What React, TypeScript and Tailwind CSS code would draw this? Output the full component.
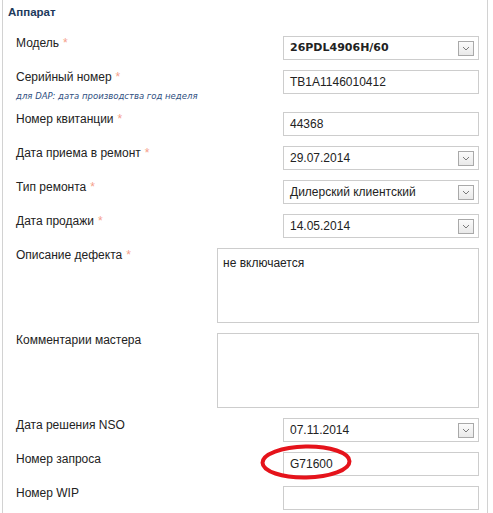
import React from 'react';

type Field = {
  label: string;
  required?: boolean;
  hint?: string;
  kind: 'input' | 'select' | 'textarea';
  value?: string;
  bold?: boolean;
  marked?: boolean;
};

const FIELDS: Field[] = [
  { label: 'Модель', required: true, kind: 'select', value: '26PDL4906H/60', bold: true },
  {
    label: 'Серийный номер',
    required: true,
    hint: 'для DAP: дата производства год неделя',
    kind: 'input',
    value: 'TB1A1146010412',
  },
  { label: 'Номер квитанции', required: true, kind: 'input', value: '44368' },
  { label: 'Дата приема в ремонт', required: true, kind: 'select', value: '29.07.2014' },
  { label: 'Тип ремонта', required: true, kind: 'select', value: 'Дилерский клиентский' },
  { label: 'Дата продажи', required: true, kind: 'select', value: '14.05.2014' },
  { label: 'Описание дефекта', required: true, kind: 'textarea', value: 'не включается' },
  { label: 'Комментарии мастера', kind: 'textarea', value: '' },
  { label: 'Дата решения NSO', kind: 'select', value: '07.11.2014' },
  { label: 'Номер запроса', kind: 'input', value: 'G71600', marked: true },
  { label: 'Номер WIP', kind: 'input', value: '' },
];

function DropArrow() {
  return (
    <span className="absolute right-[4px] top-[4px] w-[16px] h-[15px] border border-[#a9a9a9] bg-gradient-to-b from-[#fbfbfb] to-[#e9e9e9] flex items-center justify-center">
      <svg width="8" height="5" viewBox="0 0 8 5">
        <path d="M1 1 L4 4 L7 1" fill="none" stroke="#7a7a7a" strokeWidth="1" />
      </svg>
    </span>
  );
}

function Control({ field }: { field: Field }) {
  if (field.kind === 'textarea') {
    return (
      <div className="w-[262px] h-[75px] border border-[#cdcdcd] bg-white px-[5px] py-[7px] text-[12px] leading-[14px] text-[#222]">
        {field.value}
      </div>
    );
  }

  return (
    <div className="relative w-[196px] h-[24px] border border-[#cdcdcd] bg-white pl-[6px] flex items-center text-[#222]">
      <span
        className={
          field.bold
            ? "font-['DejaVu_Sans',sans-serif] font-bold text-[11px]"
            : 'text-[12px]'
        }
      >
        {field.value}
      </span>
      {field.kind === 'select' && <DropArrow />}
    </div>
  );
}

function Row({ field }: { field: Field }) {
  return (
    <div className="relative flex items-start justify-between mb-[10px]">
      <div className="text-[12px] leading-[14px] text-[#222]">
        <div>
          {field.label}
          {field.required && <span className="text-[#f5a08a] text-[12px] ml-[4px]">*</span>}
        </div>
        {field.hint && (
          <div className="mt-[6px] h-[12px] text-[8.5px] leading-[12px] italic text-[#2f4f7f] font-['DejaVu_Sans',sans-serif]">
            {field.hint}
          </div>
        )}
      </div>
      <Control field={field} />
      {field.marked && (
        <svg
          className="absolute left-[244px] top-[-9px] pointer-events-none"
          width="96"
          height="40"
          viewBox="0 0 96 40"
        >
          <ellipse
            cx="46"
            cy="19"
            rx="43.5"
            ry="15.5"
            fill="none"
            stroke="#e5131b"
            strokeWidth="4"
            transform="rotate(-1 46 19)"
          />
        </svg>
      )}
    </div>
  );
}

export default function App() {
  return (
    <div className="w-[493px] h-[513px] overflow-hidden bg-white font-['Liberation_Sans',Arial,sans-serif]">
      <div className="ml-[2px] w-[486px] h-full border-x border-[#d2d2d2]">
        <div className="pl-[5px] pt-[5px] h-[36px] text-[11.5px] leading-[14px] font-bold text-[#1d3a5c]">
          Аппарат
        </div>
        <div className="pl-[13px] pr-[8px]">
          {FIELDS.map(f => (
            <Row key={f.label} field={f} />
          ))}
        </div>
      </div>
    </div>
  );
}
